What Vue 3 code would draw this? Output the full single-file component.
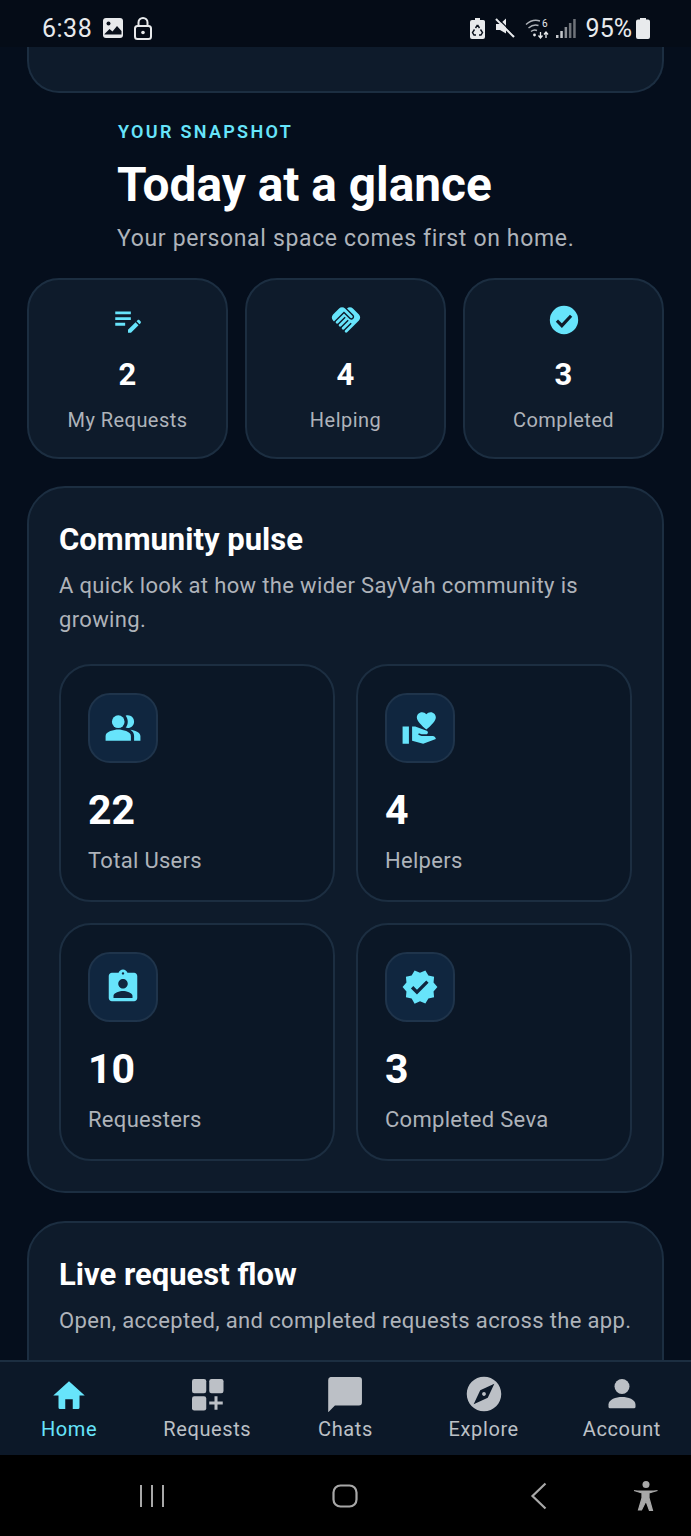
<template>
  <div class="phone">
    <div class="status">
      <div class="status-left">
        <span class="time">6:38</span>
        <svg width="22" height="22" viewBox="0 0 22 22"><rect x="1" y="1" width="20" height="20" rx="3" fill="#e8eaec"/><circle cx="6.500" cy="6.500" r="2" fill="#0a111c"/><path d="M2.500 17l5-5 3 2.500 4.500-5.500 4.500 5v3.500H2.500z" fill="#0a111c"/></svg>
        <svg width="18" height="23" viewBox="0 0 18 23"><path d="M4.500 9V5.500a4.500 4.500 0 0 1 9 0V9" fill="none" stroke="#e8eaec" stroke-width="2"/><rect x="1" y="9" width="16" height="13" rx="2.500" fill="none" stroke="#e8eaec" stroke-width="2"/><circle cx="9" cy="15.500" r="1.800" fill="#e8eaec"/></svg>
      </div>
      <div class="status-right">
        <svg class="saver" width="15" height="21" viewBox="0 0 15 21"><path d="M5 0h5v2h2.500A2 2 0 0 1 15 4v15a2 2 0 0 1-2 2H2a2 2 0 0 1-2-2V4a2 2 0 0 1 2-2h3z" fill="#e8eaec"/><path d="M7.500 7l2 3M10.500 11.500l2 3-1.500 2.500H9M6 17H4l-1.500-2.500 2-3M5.500 10l2-3" fill="none" stroke="#0a111c" stroke-width="1.400"/></svg>
        <svg class="mute" width="20" height="20" viewBox="0 0 20 20"><path d="M1 6h4l6-5.500v15L5 12H1z" fill="#e8eaec"/><path d="M1 1l18 18" stroke="#e8eaec" stroke-width="2.200"/><path d="M3 0.500l16 16" stroke="#050c17" stroke-width="1.200"/></svg>
        <svg class="wifi" width="25" height="21" viewBox="0 0 25 21"><path d="M1 6.500C6 2 11 1.500 15 3M3.500 10c3.500-3 7-3.500 10-2.500M6 13.500c2-1.500 4-1.800 6-1" fill="none" stroke="#aeb2b8" stroke-width="1.400"/><circle cx="9.500" cy="17" r="1.400" fill="#e8eaec"/><text x="17" y="9" class="wifi-six">6</text><path d="M15.500 14v6M13.500 17.500l2 2.500 2-2.500M21 20v-6M19 16.500l2-2.500 2 2.500" fill="none" stroke="#e8eaec" stroke-width="1.300"/></svg>
        <svg width="20" height="21" viewBox="0 0 20 21"><rect x="0" y="17" width="2.500" height="3" fill="#c5c8cc"/><rect x="4.300" y="13" width="2.500" height="7" fill="#c5c8cc"/><rect x="8.600" y="9" width="2.500" height="11" fill="#8a8e94"/><rect x="12.900" y="5" width="2.500" height="15" fill="#6f7379"/><rect x="17.200" y="1" width="2.500" height="19" fill="#6f7379"/></svg>
        <span class="battery-text">95%</span>
        <svg width="14" height="21" viewBox="0 0 14 21"><path d="M4 0h6v1.500h2a2 2 0 0 1 2 2V19a2 2 0 0 1-2 2H2a2 2 0 0 1-2-2V3.500a2 2 0 0 1 2-2h2z" fill="#e8eaec"/></svg>
      </div>
    </div>

    <div class="scroll">
      <div class="top-stub"></div>

      <div class="head">
        <div class="eyebrow">YOUR SNAPSHOT</div>
        <h1>Today at a glance</h1>
        <p>Your personal space comes first on home.</p>
      </div>

      <div class="snap-row">
        <div v-for="s in snapshot" :key="s.label" class="snap">
          <svg class="snap-icon" width="34" height="34" viewBox="0 0 24 24" v-html="s.icon"></svg>
          <div class="snap-num">{{ s.value }}</div>
          <div class="snap-label">{{ s.label }}</div>
        </div>
      </div>

      <section class="panel pulse">
        <h2>Community pulse</h2>
        <p class="panel-sub">A quick look at how the wider SayVah community is growing.</p>
        <div class="tiles">
          <div v-for="t in tiles" :key="t.label" class="tile">
            <div class="tile-icon">
              <svg width="38" height="38" viewBox="0 0 24 24" v-html="t.icon"></svg>
            </div>
            <div class="tile-num">{{ t.value }}</div>
            <div class="tile-label">{{ t.label }}</div>
          </div>
        </div>
      </section>

      <section class="panel live">
        <h2>Live request flow</h2>
        <p class="panel-sub">Open, accepted, and completed requests across the app.</p>
      </section>
    </div>

    <nav class="tabs">
      <div v-for="n in navItems" :key="n.label" class="tab" :class="{ active: n.active }">
        <svg width="36" height="36" viewBox="0 0 24 24" v-html="n.icon"></svg>
        <span>{{ n.label }}</span>
      </div>
    </nav>

    <div class="sysnav">
      <svg width="26" height="24" viewBox="0 0 26 24"><path d="M2 1v22M13 1v22M24 1v22" stroke="#a8a8a8" stroke-width="2"/></svg>
      <svg class="sys-home" width="26" height="24" viewBox="0 0 26 24"><rect x="1.500" y="1.500" width="23" height="21" rx="7" fill="none" stroke="#a8a8a8" stroke-width="2.200"/></svg>
      <svg class="sys-back" width="18" height="28" viewBox="0 0 18 28"><path d="M15.500 1.500L2.500 14l13 12.500" fill="none" stroke="#a8a8a8" stroke-width="2.200"/></svg>
      <svg class="sys-access" width="26" height="30" viewBox="0 0 26 30"><circle cx="13" cy="3.500" r="3.500" fill="#a8a8a8"/><path d="M1 9.500l8 2.500v5l-3.500 12h3L13 20l3.500 9.500h3L16 17v-5l8.500-2.500" fill="#a8a8a8" stroke="#a8a8a8" stroke-width="1.200"/></svg>
    </div>
  </div>
</template>

<script setup>
const accent = '#67e4fb'
const grey = '#bcc0c6'

const snapshot = [
  {
    label: 'My Requests',
    value: 2,
    icon: `<path fill="${accent}" d="M3 10h11v2H3v-2zm0-2h11V6H3v2zm0 8h7v-2H3v2zm15.010-3.130.71-.71c.39-.39 1.020-.39 1.410 0l.71.71c.39.39.39 1.020 0 1.410l-.71.71-2.120-2.120zm-.71.71-5.300 5.300V21h2.120l5.300-5.300-2.120-2.120z"/>`,
  },
  {
    label: 'Helping',
    value: 4,
    icon: `<path fill="${accent}" d="M16.480,10.410c-0.390,0.390-1.040,0.390-1.430,0l-4.470-4.460l-7.050,7.040l-0.660-0.630c-1.170-1.170-1.170-3.070,0-4.240l4.240-4.240c1.170-1.170,3.070-1.170,4.240,0L16.480,9C16.870,9.390,16.870,10.020,16.480,10.410z M17.180,8.290c0.780,0.780,0.780,2.050,0,2.830c-1.270,1.270-2.610,0.220-2.830,0l-3.760-3.760l-5.570,5.570c-0.390,0.390-0.390,1.020,0,1.410c0.390,0.390,1.020,0.390,1.420,0l4.620-4.620l0.710,0.710l-4.620,4.620c-0.390,0.390-0.390,1.020,0,1.410c0.390,0.390,1.020,0.390,1.420,0l4.620-4.620l0.710,0.710l-4.620,4.620c-0.390,0.390-0.390,1.020,0,1.410c0.390,0.390,1.020,0.390,1.410,0l4.620-4.620l0.710,0.710l-4.620,4.620c-0.390,0.390-0.390,1.020,0,1.410c0.390,0.390,1.020,0.390,1.410,0l8.320-8.340c1.170-1.170,1.170-3.070,0-4.240l-4.240-4.240c-1.150-1.150-3.010-1.170-4.180-0.060L17.180,8.290z"/>`,
  },
  {
    label: 'Completed',
    value: 3,
    icon: `<circle cx="12" cy="12" r="10" fill="${accent}"/><path fill="none" stroke="#0f1c2b" stroke-width="2.200" d="M7 12.500l3.500 3.500L17 9"/>`,
  },
]

const tiles = [
  {
    label: 'Total Users',
    value: 22,
    icon: `<g fill="${accent}"><path d="M16.670 13.130C18.040 14.060 19 15.320 19 17v3h4v-3c0-2.180-3.570-3.470-6.330-3.870z"/><circle cx="9" cy="8" r="4"/><path d="M15 12c2.210 0 4-1.790 4-4s-1.790-4-4-4c-.47 0-.91.100-1.330.240C14.500 5.270 15 6.580 15 8s-.5 2.730-1.330 3.760c.42.140.86.240 1.330.240z"/><path d="M9 13c-2.670 0-8 1.340-8 4v3h16v-3c0-2.660-5.330-4-8-4z"/></g>`,
  },
  {
    label: 'Helpers',
    value: 4,
    icon: `<path fill="${accent}" d="M1 11h4v11H1zm15-7.750C16.650 2.490 17.660 2 18.700 2 20.550 2 22 3.450 22 5.300c0 2.270-2.910 4.900-6 7.700-3.090-2.810-6-5.440-6-7.700C10 3.450 11.450 2 13.300 2c1.040 0 2.050.49 2.700 1.250zM20 17h-7l-2.090-.73.33-.94L13 16h2.820c.65 0 1.180-.53 1.180-1.180 0-.49-.31-.93-.77-1.110L8.970 11H7v9.020L14 22l8.010-3c-.01-1.100-.9-2-2.010-2z"/>`,
  },
  {
    label: 'Requesters',
    value: 10,
    icon: `<path fill="${accent}" d="M19 3h-4.180C14.400 1.840 13.300 1 12 1c-1.300 0-2.400.84-2.820 2H5c-1.100 0-2 .9-2 2v14c0 1.100.9 2 2 2h14c1.100 0 2-.9 2-2V5c0-1.100-.9-2-2-2zm-7-.25c.22 0 .41.100.55.250.12.130.2.310.2.500 0 .41-.34.750-.75.750s-.75-.34-.75-.75c0-.19.08-.37.2-.5.140-.15.330-.25.550-.25zM12 7c1.660 0 3 1.340 3 3s-1.340 3-3 3-3-1.340-3-3 1.340-3 3-3zm6 12H6v-1.400c0-2 4-3.100 6-3.100s6 1.100 6 3.100V19z"/>`,
  },
  {
    label: 'Completed Seva',
    value: 3,
    icon: `<path fill="${accent}" d="M23 12l-2.440-2.790.34-3.690-3.610-.82-1.890-3.200L12 2.960 8.600 1.500 6.710 4.690 3.100 5.500l.34 3.700L1 12l2.440 2.790-.34 3.700 3.610.82L8.600 22.500l3.400-1.470 3.400 1.460 1.890-3.190 3.610-.82-.34-3.690L23 12zm-12.910 4.720l-3.800-3.810 1.480-1.480 2.320 2.330 5.850-5.870 1.480 1.480-7.330 7.350z"/>`,
  },
]

const navItems = [
  {
    label: 'Home',
    active: true,
    icon: `<path fill="${accent}" d="M12 3.500L1.500 13H5v8a1 1 0 0 0 1 1h3.500v-6.500h5V22H18a1 1 0 0 0 1-1v-8h3.500z"/>`,
  },
  {
    label: 'Requests',
    icon: `<g fill="${grey}"><rect x="2" y="2" width="9.500" height="9.500" rx="1.500"/><rect x="13.500" y="2" width="9.500" height="9.500" rx="1.500"/><rect x="2" y="13.500" width="9.500" height="9.500" rx="1.500"/><path d="M17 13.500h2v3.500h3.500v2H19v3.500h-2V19h-3.500v-2H17z"/></g>`,
  },
  {
    label: 'Chats',
    icon: `<path fill="${grey}" d="M2.300.7h19a2 2 0 0 1 2 2v15a2 2 0 0 1-2 2H5.300L.8 24.200V2.700a2 2 0 0 1 1.500-2z"/>`,
  },
  {
    label: 'Explore',
    icon: `<path fill="${grey}" transform="translate(-1.800 -1.800) scale(1.150)" d="M12 10.900c-.61 0-1.100.49-1.100 1.100s.49 1.100 1.100 1.100c.61 0 1.100-.49 1.100-1.100s-.49-1.100-1.100-1.100zM12 2C6.480 2 2 6.480 2 12s4.480 10 10 10 10-4.480 10-10S17.520 2 12 2zm2.190 12.190L6 18l3.810-8.190L18 6l-3.810 8.190z"/>`,
  },
  {
    label: 'Account',
    icon: `<circle cx="12" cy="7" r="5" fill="${grey}"/><path fill="${grey}" d="M3 20.500V19c0-3.400 5-5 9-5s9 1.600 9 5v1.500a1 1 0 0 1-1 1H4a1 1 0 0 1-1-1z"/>`,
  },
]
</script>

<style>
html, body {
  margin: 0;
  background: #050e1c;
}
</style>

<style scoped>
.phone {
  width: 691px;
  height: 1536px;
  display: flex;
  flex-direction: column;
  overflow: hidden;
  background: #050e1c;
  font-family: Roboto, "Liberation Sans", sans-serif;
  color: #fff;
}

.status {
  height: 47px;
  flex: none;
  display: flex;
  justify-content: space-between;
  align-items: center;
  padding: 9px 41px 0 43px;
  box-sizing: border-box;
  background: #050c17;
  color: #e8eaec;
}
.status-left, .status-right {
  display: flex;
  align-items: center;
}
.status-left { gap: 10px; margin-left: -1px; }
.status-right { gap: 6px; }
.saver { margin-right: 4px; }
.mute { margin-right: 4px; }
.time {
  font-size: 25px;
  letter-spacing: 0.5px;
}
.wifi-six {
  font-size: 10px;
  fill: #e8eaec;
  font-family: Roboto, sans-serif;
}
.battery-text {
  font-size: 25px;
  margin-left: 4px;
  margin-right: -2px;
}

.scroll {
  flex: 1;
  min-height: 0;
  overflow: hidden;
  padding: 0 27px;
}

.top-stub {
  height: 46px;
  box-sizing: border-box;
  background: #0e1b2b;
  border: 2px solid #1c2e41;
  border-top: none;
  border-radius: 0 0 32px 32px;
}

.head {
  padding: 28px 0 0 91px;
}
.eyebrow {
  color: #67e4fb;
  font-size: 18px;
  font-weight: 600;
  letter-spacing: 2.300px;
  line-height: 22px;
}
h1 {
  margin: 14px 0 0 -1px;
  font-size: 47.800px;
  line-height: 56px;
  font-weight: 700;
}
.head p {
  margin: 10px 0 0 -1px;
  font-size: 23px;
  line-height: 32px;
  letter-spacing: 0.65px;
  color: #aeb3ba;
}

.snap-row {
  margin-top: 23px;
  display: grid;
  grid-template-columns: repeat(3, 1fr);
  gap: 17px;
}
.snap {
  height: 181px;
  box-sizing: border-box;
  background: #0e1b2b;
  border: 2px solid #1c2e41;
  border-radius: 32px;
  display: flex;
  flex-direction: column;
  align-items: center;
  padding-top: 23px;
}
.snap-icon { flex: none; }
.snap-num {
  margin-top: 20px;
  font-size: 31px;
  line-height: 36px;
  font-weight: 700;
}
.snap-label {
  margin-top: 13px;
  font-size: 20px;
  line-height: 28px;
  letter-spacing: 0.45px;
  color: #aeb3ba;
}

.panel {
  margin-top: 28px;
  background: #0e1b2b;
  border: 2px solid #1c2e41;
  border-radius: 38px;
  box-sizing: border-box;
  padding: 32px 30px 30px;
}
.pulse { margin-top: 27px; }
.live { min-height: 200px; }
.panel h2 {
  margin: 0;
  font-size: 31px;
  line-height: 40px;
  font-weight: 700;
}
.panel-sub {
  margin: 9px 0 0;
  font-size: 22px;
  line-height: 34px;
  letter-spacing: 0.35px;
  color: #aeb3ba;
}

.tiles {
  margin-top: 27px;
  display: grid;
  grid-template-columns: 1fr 1fr;
  gap: 21px;
}
.tile {
  height: 238px;
  box-sizing: border-box;
  background: #0b1726;
  border: 2px solid #1c2e41;
  border-radius: 32px;
  padding: 27px 27px 26px;
}
.tile-icon {
  width: 70px;
  height: 70px;
  box-sizing: border-box;
  background: #10263f;
  border: 2px solid #1f344b;
  border-radius: 22px;
  display: flex;
  align-items: center;
  justify-content: center;
}
.tile-num {
  margin-top: 23px;
  font-size: 41px;
  line-height: 48px;
  font-weight: 700;
}
.tile-label {
  margin-top: 12px;
  font-size: 22px;
  line-height: 30px;
  letter-spacing: 0.3px;
  color: #aeb3ba;
}

.tabs {
  height: 95px;
  flex: none;
  box-sizing: border-box;
  background: #0c1828;
  border-top: 2px solid #1c2e41;
  display: grid;
  grid-template-columns: repeat(5, 1fr);
}
.tab {
  display: flex;
  flex-direction: column;
  align-items: center;
  padding-top: 14px;
  font-size: 20px;
  letter-spacing: 0.6px;
  color: #bcc0c6;
}
.tab span {
  line-height: 28px;
  margin-top: 3px;
}
.tab.active { color: #67e4fb; }

.sysnav {
  height: 81px;
  flex: none;
  background: #000;
  display: flex;
  align-items: center;
  padding-left: 139px;
}
.sys-home { margin-left: 167px; }
.sys-back { margin-left: 172px; }
.sys-access { margin-left: 85px; }
</style>
